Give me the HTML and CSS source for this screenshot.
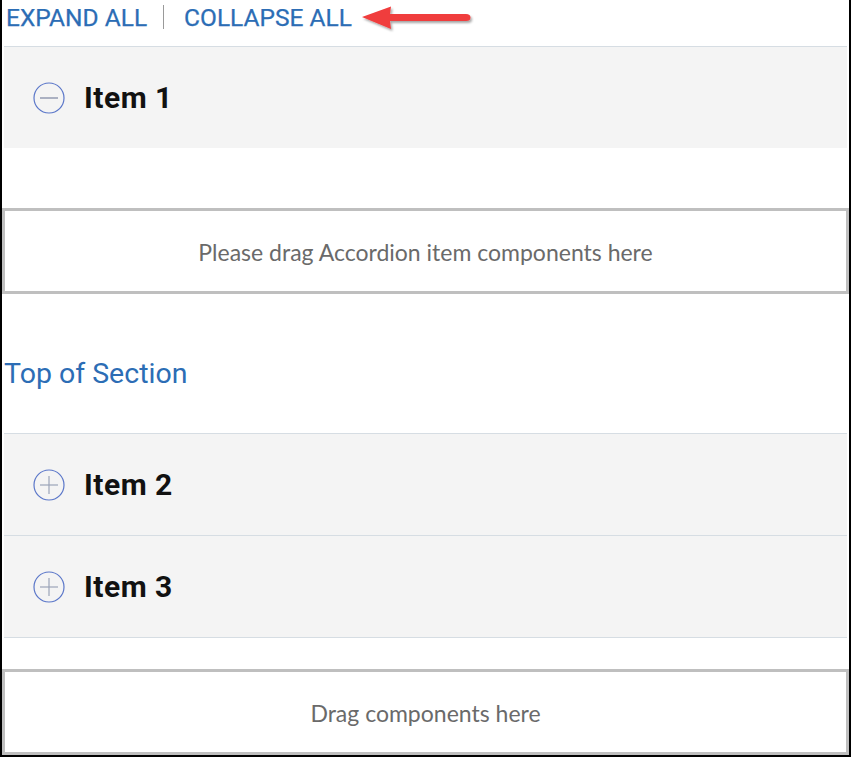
FILE: index.html
```html
<!DOCTYPE html>
<html>
<head>
<meta charset="utf-8">
<link rel="stylesheet" href="styles.css">
</head>
<body>
<div class="page">
  <div class="toolbar">
    <a class="tool-link">EXPAND ALL</a>
    <span class="sep"></span>
    <a class="tool-link">COLLAPSE ALL</a>
    <svg class="arrow" width="114" height="32" viewBox="0 0 114 32">
      <defs>
        <filter id="sh" x="-10%" y="-30%" width="130%" height="180%">
          <feDropShadow dx="1.5" dy="2" stdDeviation="1.2" flood-color="#000" flood-opacity="0.35"/>
        </filter>
      </defs>
      <g filter="url(#sh)" fill="#f03d3d">
        <path d="M2 13 L31 2.5 L30 10 L106 10 Q110.5 10 110.5 13.5 Q110.5 17 106 17 L30 17 L31 25 Z"/>
      </g>
    </svg>
  </div>

  <div class="acc-item">
    <div class="acc-head">
      <svg class="acc-icon" width="32" height="32" viewBox="0 0 32 32">
        <circle cx="16" cy="16" r="15" fill="none" stroke="#5b77c9" stroke-width="1.2"/>
        <line x1="7" y1="16" x2="25" y2="16" stroke="#a3aabd" stroke-width="1.8"/>
      </svg>
      <span class="acc-title">Item 1</span>
    </div>
  </div>

  <div class="drop drop-first">Please drag Accordion item components here</div>

  <div class="section-link">Top of Section</div>

  <div class="acc-list">
    <div class="acc-item">
      <div class="acc-head">
        <svg class="acc-icon" width="32" height="32" viewBox="0 0 32 32">
          <circle cx="16" cy="16" r="15" fill="none" stroke="#5b77c9" stroke-width="1.2"/>
          <line x1="7" y1="16" x2="25" y2="16" stroke="#9aa3b8" stroke-width="1.2"/>
          <line x1="16" y1="7" x2="16" y2="25" stroke="#9aa3b8" stroke-width="1.2"/>
        </svg>
        <span class="acc-title">Item 2</span>
      </div>
    </div>
    <div class="acc-item acc-last">
      <div class="acc-head">
        <svg class="acc-icon" width="32" height="32" viewBox="0 0 32 32">
          <circle cx="16" cy="16" r="15" fill="none" stroke="#5b77c9" stroke-width="1.2"/>
          <line x1="7" y1="16" x2="25" y2="16" stroke="#9aa3b8" stroke-width="1.2"/>
          <line x1="16" y1="7" x2="16" y2="25" stroke="#9aa3b8" stroke-width="1.2"/>
        </svg>
        <span class="acc-title">Item 3</span>
      </div>
    </div>
  </div>

  <div class="drop drop-last">Drag components here</div>
</div>
</body>
</html>
```

FILE: styles.css
```css
html, body {
  margin: 0;
  padding: 0;
  background: #fff;
}

.page {
  width: 851px;
  height: 757px;
  box-sizing: border-box;
  border-left: 2px solid #000;
  border-right: 2px solid #000;
  border-bottom: 2px solid #000;
  overflow: hidden;
  font-family: Roboto, "Liberation Sans", sans-serif;
}

.toolbar {
  height: 46px;
  display: flex;
  align-items: flex-start;
  padding-left: 4px;
  box-sizing: border-box;
}

.tool-link {
  font-size: 24.5px;
  line-height: 30px;
  padding-top: 3px;
  color: #2c6db5;
  text-decoration: none;
  cursor: pointer;
  -webkit-text-stroke: 0.25px #2c6db5;
}

.sep {
  width: 1px;
  height: 24px;
  margin: 5px 20px 0 16px;
  background: #9a9a9a;
}

.arrow {
  margin-left: 8px;
  margin-top: 4px;
}

.acc-item {
  margin: 0 2px;
  border-top: 1px solid #d6dde3;
  background: #f4f4f4;
}

.acc-last {
  border-bottom: 1px solid #d6dde3;
}

.acc-head {
  height: 101px;
  display: flex;
  align-items: center;
  padding-left: 29px;
}

.acc-icon {
  flex: none;
}

.acc-title {
  margin-left: 19px;
  font-size: 30px;
  font-weight: 700;
  color: #111;
  letter-spacing: 0.5px;
}

.drop {
  height: 86px;
  box-sizing: border-box;
  border: 3px solid #bfbfbf;
  display: flex;
  align-items: center;
  justify-content: center;
  padding-top: 2px;
  font-family: Lato, "Open Sans", sans-serif;
  font-size: 23px;
  color: #6a6a6a;
}

.drop-first {
  margin-top: 60px;
}

.section-link {
  font-size: 28.5px;
  line-height: 34px;
  color: #2c6db5;
  padding-left: 2px;
  margin-top: 63px;
  margin-bottom: 42px;
}

.drop-last {
  margin-top: 31px;
}
```
